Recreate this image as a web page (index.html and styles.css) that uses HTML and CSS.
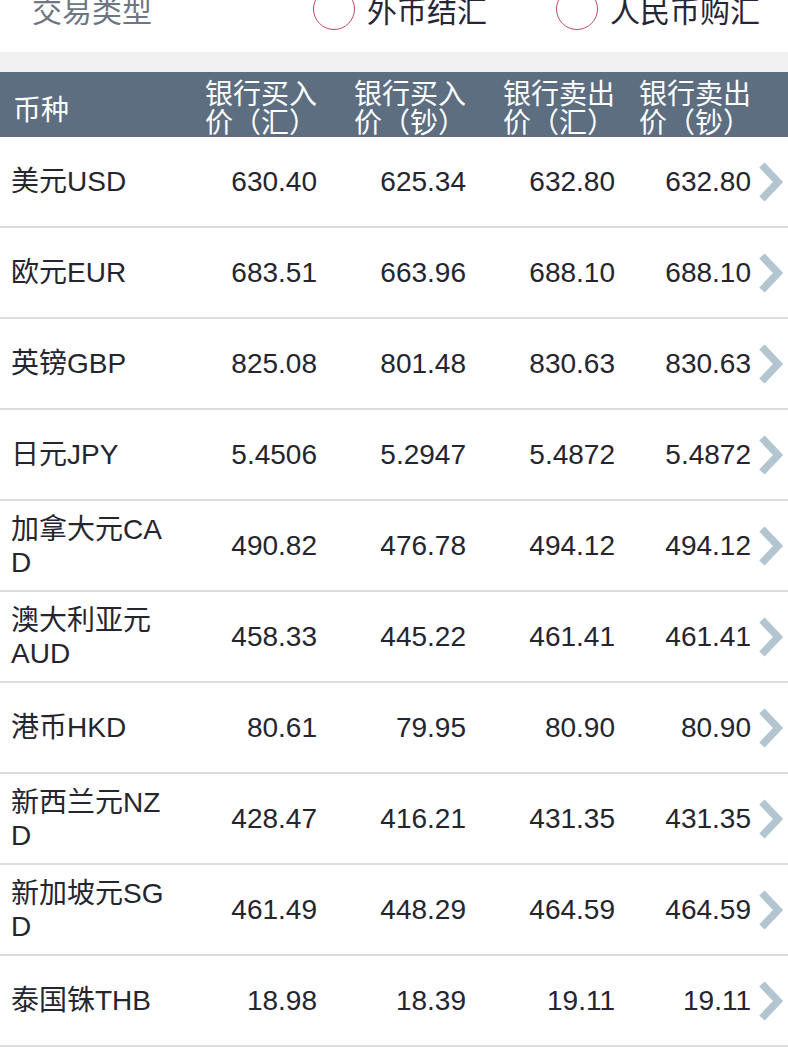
FILE: index.html
```html
<!DOCTYPE html>
<html lang="zh-CN">
<head>
<meta charset="utf-8">
<title>汇率</title>
<link rel="stylesheet" href="styles.css">
</head>
<body>
<div class="top">
  <div class="top-inner">
    <span class="label">交易类型</span>
    <div class="opt"><span class="radio"></span><span class="opt-text">外币结汇</span></div>
    <div class="opt"><span class="radio"></span><span class="opt-text">人民币购汇</span></div>
  </div>
</div>
<div class="band"></div>
<div class="table">
  <div class="grid thead">
    <div class="c1 h1">币种</div>
    <div class="num hn">银行买入<br>价（汇）</div>
    <div class="num hn">银行买入<br>价（钞）</div>
    <div class="num hn">银行卖出<br>价（汇）</div>
    <div class="num hn">银行卖出<br>价（钞）</div>
    <div></div>
  </div>

  <div class="grid row"><div class="c1">美元USD</div><div class="num">630.40</div><div class="num">625.34</div><div class="num">632.80</div><div class="num">632.80</div><div class="chev"><svg width="25" height="40" viewBox="0 0 25 40"><polyline points="3,3 19,20 3,37" fill="none" stroke="#b3c5d0" stroke-width="7.5"/></svg></div></div>
  <div class="grid row"><div class="c1">欧元EUR</div><div class="num">683.51</div><div class="num">663.96</div><div class="num">688.10</div><div class="num">688.10</div><div class="chev"><svg width="25" height="40" viewBox="0 0 25 40"><polyline points="3,3 19,20 3,37" fill="none" stroke="#b3c5d0" stroke-width="7.5"/></svg></div></div>
  <div class="grid row"><div class="c1">英镑GBP</div><div class="num">825.08</div><div class="num">801.48</div><div class="num">830.63</div><div class="num">830.63</div><div class="chev"><svg width="25" height="40" viewBox="0 0 25 40"><polyline points="3,3 19,20 3,37" fill="none" stroke="#b3c5d0" stroke-width="7.5"/></svg></div></div>
  <div class="grid row"><div class="c1">日元JPY</div><div class="num">5.4506</div><div class="num">5.2947</div><div class="num">5.4872</div><div class="num">5.4872</div><div class="chev"><svg width="25" height="40" viewBox="0 0 25 40"><polyline points="3,3 19,20 3,37" fill="none" stroke="#b3c5d0" stroke-width="7.5"/></svg></div></div>
  <div class="grid row"><div class="c1">加拿大元CAD</div><div class="num">490.82</div><div class="num">476.78</div><div class="num">494.12</div><div class="num">494.12</div><div class="chev"><svg width="25" height="40" viewBox="0 0 25 40"><polyline points="3,3 19,20 3,37" fill="none" stroke="#b3c5d0" stroke-width="7.5"/></svg></div></div>
  <div class="grid row"><div class="c1">澳大利亚元AUD</div><div class="num">458.33</div><div class="num">445.22</div><div class="num">461.41</div><div class="num">461.41</div><div class="chev"><svg width="25" height="40" viewBox="0 0 25 40"><polyline points="3,3 19,20 3,37" fill="none" stroke="#b3c5d0" stroke-width="7.5"/></svg></div></div>
  <div class="grid row"><div class="c1">港币HKD</div><div class="num">80.61</div><div class="num">79.95</div><div class="num">80.90</div><div class="num">80.90</div><div class="chev"><svg width="25" height="40" viewBox="0 0 25 40"><polyline points="3,3 19,20 3,37" fill="none" stroke="#b3c5d0" stroke-width="7.5"/></svg></div></div>
  <div class="grid row"><div class="c1">新西兰元NZD</div><div class="num">428.47</div><div class="num">416.21</div><div class="num">431.35</div><div class="num">431.35</div><div class="chev"><svg width="25" height="40" viewBox="0 0 25 40"><polyline points="3,3 19,20 3,37" fill="none" stroke="#b3c5d0" stroke-width="7.5"/></svg></div></div>
  <div class="grid row"><div class="c1">新加坡元SGD</div><div class="num">461.49</div><div class="num">448.29</div><div class="num">464.59</div><div class="num">464.59</div><div class="chev"><svg width="25" height="40" viewBox="0 0 25 40"><polyline points="3,3 19,20 3,37" fill="none" stroke="#b3c5d0" stroke-width="7.5"/></svg></div></div>
  <div class="grid row"><div class="c1">泰国铢THB</div><div class="num">18.98</div><div class="num">18.39</div><div class="num">19.11</div><div class="num">19.11</div><div class="chev"><svg width="25" height="40" viewBox="0 0 25 40"><polyline points="3,3 19,20 3,37" fill="none" stroke="#b3c5d0" stroke-width="7.5"/></svg></div></div>
</div>
</body>
</html>
```
FILE: styles.css
```css
html, body {
  margin: 0;
  padding: 0;
  background: #ffffff;
}
body {
  font-family: "Liberation Sans", "Noto Sans CJK SC", sans-serif;
  color: #25252f;
  overflow: hidden;
}
.top {
  height: 52px;
  display: flow-root;
}
.top-inner {
  margin-top: -12px;
  height: 42px;
  display: flex;
  align-items: center;
  padding-left: 32px;
  font-family: "Noto Sans CJK SC", sans-serif;
  font-size: 30px;
  white-space: nowrap;
}
.label {
  flex: none;
  width: 281px;
  color: #6d7682;
}
.opt {
  flex: none;
  display: flex;
  align-items: center;
  gap: 12px;
  margin-right: 69px;
  color: #262638;
}
.radio {
  flex: none;
  width: 40px;
  height: 40px;
  border: 1.5px solid #c34a63;
  border-radius: 50%;
  box-sizing: content-box;
}
.opt-text {
  font-size: 30px;
}
.band {
  height: 20px;
  background: #f0f0f0;
}
.grid {
  display: grid;
  grid-template-columns: 205px 112px 149px 149px 136px 1fr;
  align-items: center;
}
.thead {
  height: 65px;
  background: #5c6e80;
  color: #ffffff;
  font-family: "Noto Sans CJK SC", sans-serif;
  font-size: 28px;
  overflow: hidden;
}
.h1 {
  padding-top: 7px;
  padding-left: 13px !important;
}
.hn {
  align-self: start;
  padding-top: 6px;
  line-height: 29px;
  white-space: nowrap;
}
.row {
  height: 89px;
  border-bottom: 2px solid #dcdcdc;
  font-size: 28px;
  line-height: 33px;
}
.c1 {
  padding-left: 11px;
  width: 155px;
  word-break: break-all;
}
.num {
  text-align: right;
}
.chev {
  display: flex;
  align-items: center;
  padding-left: 8px;
}
.chev svg {
  display: block;
}
```
